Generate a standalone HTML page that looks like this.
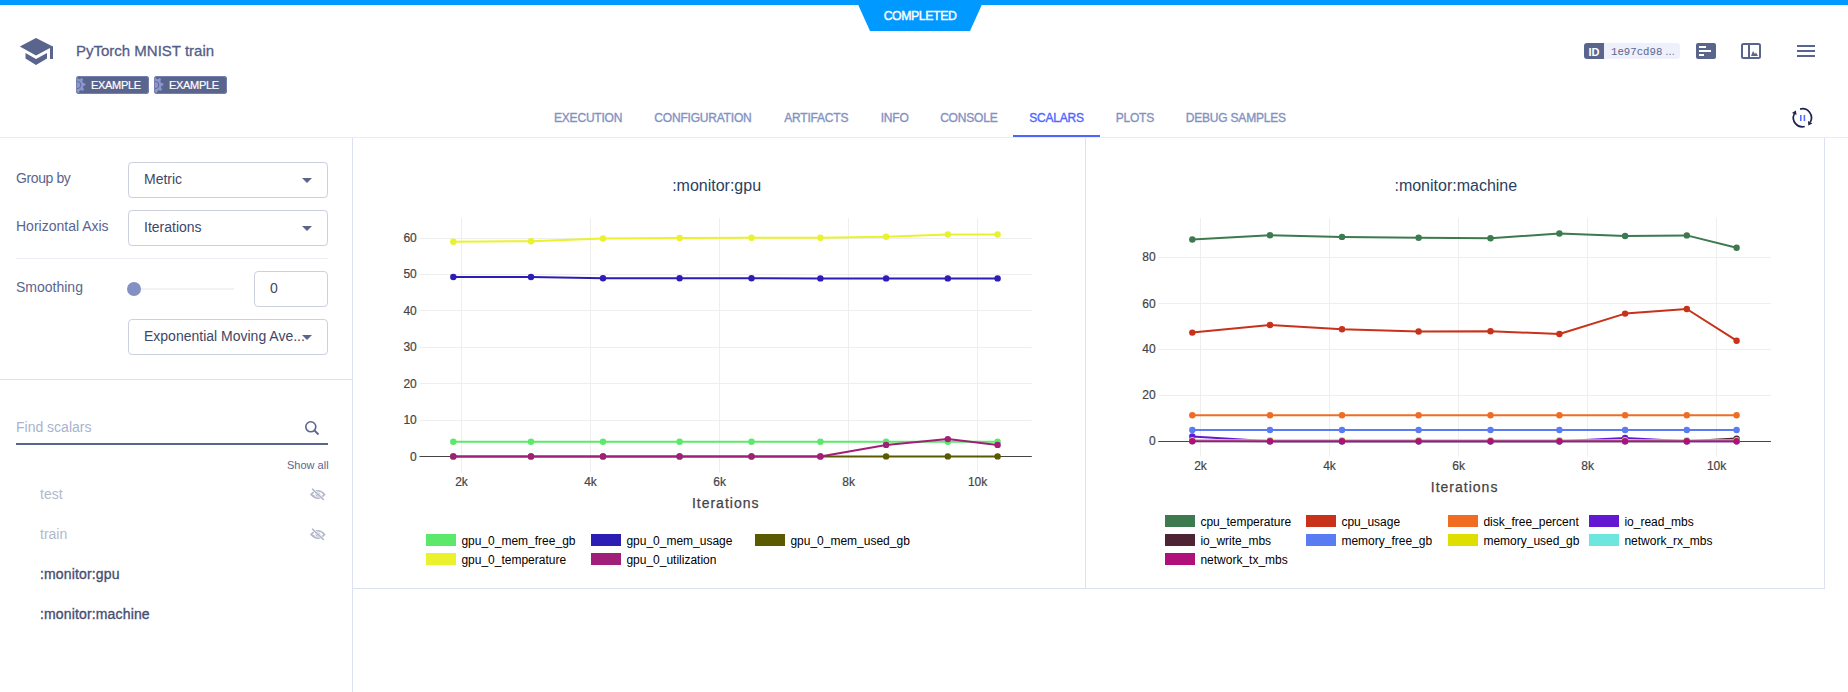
<!DOCTYPE html>
<html><head><meta charset="utf-8">
<style>
html,body{margin:0;padding:0;}
body{width:1848px;height:692px;overflow:hidden;position:relative;background:#fff;font-family:"Liberation Sans", sans-serif;}
.a{position:absolute;white-space:nowrap;}
.tab{position:absolute;top:109px;width:200px;text-align:center;font-size:12px;letter-spacing:-0.2px;font-weight:normal;-webkit-text-stroke:0.35px #8492c2;color:#8492c2;line-height:18px;white-space:nowrap;}
.tab.act{color:#4d66ff;-webkit-text-stroke:0.35px #4d66ff;}
.lbl{position:absolute;left:16px;font-size:14px;color:#5a658e;line-height:18px;white-space:nowrap;}
.dd{position:absolute;left:128px;width:198px;border:1px solid #cdd0df;border-radius:4px;background:#fff;}
.ddt{position:absolute;left:15px;font-size:14px;color:#3f4766;line-height:18px;white-space:nowrap;}
.arr{position:absolute;width:0;height:0;border-left:5px solid transparent;border-right:5px solid transparent;border-top:5px solid #5a658e;}
.it{position:absolute;left:40px;font-size:14px;line-height:18px;white-space:nowrap;}
svg text{font-family:"Liberation Sans", sans-serif;}
.tk{font-size:12px;fill:#444;stroke:#444;stroke-width:0.2px;}
.ttl{font-size:16px;fill:#2a3f5f;}
.itl{font-size:14px;fill:#444;stroke:#444;stroke-width:0.25px;letter-spacing:1px;}
.lg{font-size:12px;fill:#000;}
</style></head><body>
<!-- top status bar -->
<svg class="a" style="left:0;top:0" width="1848" height="40">
<rect x="0" y="0" width="1848" height="5" fill="#0099ff"/>
<polygon points="856,0 984,0 970,31 870,31" fill="#0099ff"/>
<text x="920" y="20" text-anchor="middle" font-size="12.3" fill="#fff" stroke="#fff" stroke-width="0.4" letter-spacing="-0.42">COMPLETED</text>
</svg>
<!-- cap icon -->
<svg class="a" style="left:0;top:0" width="70" height="70">
<polygon points="19.8,46.6 36,38 52.8,46.6 36,55.4" fill="#5a658e"/>
<polygon points="25.5,53 36,59 47,53 47,58.6 36,65 25.5,58.6" fill="#5a658e"/>
<rect x="50" y="46.2" width="3" height="12.8" fill="#5a658e"/>
</svg>
<div class="a" style="left:76px;top:42px;font-size:15px;line-height:18px;color:#535d88;-webkit-text-stroke:0.3px #535d88">PyTorch MNIST train</div>
<div class="a" style="left:76px;top:76px;width:73px;height:18px;background:#5a658e;border-radius:3px"></div>
<div class="a" style="left:154px;top:76px;width:73px;height:18px;background:#5a658e;border-radius:3px"></div>
<svg class="a" style="left:76px;top:76px" width="160" height="18">
<defs><clipPath id="c1"><rect x="0" y="0" width="73" height="18" rx="3"/></clipPath><clipPath id="c2"><rect x="78" y="0" width="73" height="18" rx="3"/></clipPath></defs>
<g clip-path="url(#c1)"><polygon points="9.34,7.38 9.50,9.00 7.28,10.21 6.93,11.37 8.10,13.61 7.07,14.87 4.64,14.16 3.57,14.73 2.82,17.14 1.20,17.30 -0.01,15.08 -1.17,14.73 -3.41,15.90 -4.67,14.87 -3.96,12.44 -4.53,11.37 -6.94,10.62 -7.10,9.00 -4.88,7.79 -4.53,6.63 -5.70,4.39 -4.67,3.13 -2.24,3.84 -1.17,3.27 -0.42,0.86 1.20,0.70 2.41,2.92 3.57,3.27 5.81,2.10 7.07,3.13 6.36,5.56 6.93,6.63" fill="#8a96cc"/><circle cx="1.2" cy="9" r="3.6" fill="none" stroke="#5a658e" stroke-width="0.9"/></g>
<g clip-path="url(#c2)"><polygon points="87.34,7.38 87.50,9.00 85.28,10.21 84.93,11.37 86.10,13.61 85.07,14.87 82.64,14.16 81.57,14.73 80.82,17.14 79.20,17.30 77.99,15.08 76.83,14.73 74.59,15.90 73.33,14.87 74.04,12.44 73.47,11.37 71.06,10.62 70.90,9.00 73.12,7.79 73.47,6.63 72.30,4.39 73.33,3.13 75.76,3.84 76.83,3.27 77.58,0.86 79.20,0.70 80.41,2.92 81.57,3.27 83.81,2.10 85.07,3.13 84.36,5.56 84.93,6.63" fill="#8a96cc"/><circle cx="79.2" cy="9" r="3.6" fill="none" stroke="#5a658e" stroke-width="0.9"/></g>
<rect x="0.5" y="0.5" width="72" height="17" rx="3" fill="none" stroke="#7580b0" stroke-width="1"/>
<rect x="78.5" y="0.5" width="72" height="17" rx="3" fill="none" stroke="#7580b0" stroke-width="1"/>
</svg>
<div class="a" style="left:91px;top:78px;font-size:11px;letter-spacing:-0.3px;line-height:14px;color:#fff;-webkit-text-stroke:0.2px #fff">EXAMPLE</div>
<div class="a" style="left:169px;top:78px;font-size:11px;letter-spacing:-0.3px;line-height:14px;color:#fff;-webkit-text-stroke:0.2px #fff">EXAMPLE</div>
<!-- id badge -->
<div class="a" style="left:1584px;top:43px;width:96px;height:16px;background:#eef1fb;border-radius:3px"></div>
<div class="a" style="left:1584px;top:43px;width:20px;height:16px;background:#5a658e;border-radius:3px 0 0 3px"></div>
<div class="a" style="left:1588.5px;top:44.5px;font-size:11px;line-height:14px;font-weight:bold;color:#fff">ID</div>
<div class="a" style="left:1611px;top:45px;font-size:10.7px;line-height:14px;font-family:'Liberation Mono',monospace;color:#5a658e">1e97cd98</div>
<div class="a" style="left:1665px;top:45px;font-size:10px;line-height:14px;color:#5a658e">&#8230;</div>
<svg class="a" style="left:1690px;top:35px" width="140" height="30">
<rect x="6" y="8" width="20" height="16" rx="2" fill="#5a658e"/>
<rect x="9" y="11" width="7" height="2" fill="#fff"/><rect x="9" y="15" width="12" height="2" fill="#fff"/><rect x="9" y="19" width="5" height="2" fill="#fff"/>
<rect x="52" y="9" width="18" height="14" rx="1.5" fill="none" stroke="#5a658e" stroke-width="2"/>
<rect x="58" y="9" width="2" height="14" fill="#5a658e"/>
<polygon points="61,21 63,16 65,19 66,17.5 68,21" fill="#5a658e"/>
<rect x="107" y="10" width="18" height="2" fill="#5a658e"/><rect x="107" y="15" width="18" height="2" fill="#5a658e"/><rect x="107" y="20" width="18" height="2" fill="#5a658e"/>
</svg>
<!-- tabs -->
<div class="tab" style="left:488.12px">EXECUTION</div><div class="tab" style="left:602.92px">CONFIGURATION</div><div class="tab" style="left:716.22px">ARTIFACTS</div><div class="tab" style="left:794.62px">INFO</div><div class="tab" style="left:868.82px">CONSOLE</div><div class="tab act" style="left:956.52px">SCALARS</div><div class="tab" style="left:1034.82px">PLOTS</div><div class="tab" style="left:1135.82px">DEBUG SAMPLES</div>
<div class="a" style="left:0;top:137px;width:1848px;height:1px;background:#e9ebf0"></div>
<div class="a" style="left:1013px;top:135px;width:87px;height:2px;background:#4d66ff"></div>
<svg class="a" style="left:1790px;top:106px" width="24" height="24" viewBox="0 0 24 24">
<path d="M10.07 3.11 A9.0 9.0 0 0 1 20.19 16.30" fill="none" stroke="#1d2350" stroke-width="1.7"/>
<path d="M14.73 20.49 A9.0 9.0 0 0 1 4.24 8.00" fill="none" stroke="#1d2350" stroke-width="1.7"/>
<polygon points="18.30,19.57 22.38,17.56 18.01,15.04" fill="#1d2350"/>
<polygon points="5.84,4.57 1.96,6.93 6.53,9.06" fill="#1d2350"/>
<rect x="10" y="9" width="1.6" height="6" fill="#5a6cff"/><rect x="13.6" y="9" width="1.6" height="6" fill="#5a6cff"/>
</svg>
<!-- sidebar -->
<div class="a" style="left:352px;top:138px;width:1px;height:554px;background:#dde0ee"></div>
<div class="lbl" style="top:169px;letter-spacing:-0.4px">Group by</div>
<div class="lbl" style="top:217px">Horizontal Axis</div>
<div class="dd" style="top:162px;height:34px"><div class="ddt" style="top:7px">Metric</div><div class="arr" style="left:173px;top:15px"></div></div>
<div class="dd" style="top:210px;height:34px"><div class="ddt" style="top:7px">Iterations</div><div class="arr" style="left:173px;top:15px"></div></div>
<div class="a" style="left:16px;top:258px;width:312px;height:1px;background:#eceef4"></div>
<div class="lbl" style="top:278px">Smoothing</div>
<div class="a" style="left:134px;top:288px;width:100px;height:2px;background:#f1f2f5"></div>
<div class="a" style="left:127px;top:282px;width:14px;height:14px;border-radius:50%;background:#8290c4"></div>
<div class="dd" style="left:254px;width:72px;top:271px;height:34px"><div class="ddt" style="top:7px">0</div></div>
<div class="dd" style="top:319px;height:34px"><div class="ddt" style="top:7px">Exponential Moving Ave...</div><div class="arr" style="left:173px;top:15px"></div></div>
<div class="a" style="left:0;top:379px;width:352px;height:1px;background:#dde0ee"></div>
<div class="a" style="left:16px;top:418px;font-size:14px;line-height:18px;color:#a9b2d2">Find scalars</div>
<div class="a" style="left:16px;top:443px;width:312px;height:2px;background:#5a658e"></div>
<svg class="a" style="left:304px;top:420px" width="16" height="16" viewBox="0 0 16 16">
<circle cx="6.8" cy="6.8" r="5" fill="none" stroke="#5a658e" stroke-width="1.6"/>
<line x1="10.5" y1="10.5" x2="14.5" y2="14.5" stroke="#5a658e" stroke-width="1.8"/>
</svg>
<div class="a" style="left:287px;top:458px;font-size:11px;line-height:14px;color:#5a658e">Show all</div>
<div class="it" style="top:485px;color:#b3b8ca">test</div>
<div class="it" style="top:525px;color:#b3b8ca">train</div>
<div class="it" style="top:565px;color:#474f73;font-size:14px;letter-spacing:0.15px;-webkit-text-stroke:0.35px #474f73">:monitor:gpu</div>
<div class="it" style="top:605px;color:#474f73;font-size:14px;letter-spacing:0.15px;-webkit-text-stroke:0.35px #474f73">:monitor:machine</div>
<svg class="a" style="left:306px;top:484px" width="24" height="60" viewBox="0 0 24 60">
<g><path d="M5 10.5 Q11.8 3 18.6 10.5 Q11.8 18 5 10.5Z" fill="none" stroke="#b3b8ca" stroke-width="1.7"/>
<circle cx="11.8" cy="10.5" r="2.3" fill="#b3b8ca"/>
<path d="M5.6 10.5 Q8 13.8 11 14.6 L8 11 Z" fill="#b3b8ca"/>
<line x1="6.2" y1="4.8" x2="17.6" y2="15.6" stroke="#fff" stroke-width="2.6"/>
<line x1="6.5" y1="5.2" x2="17.3" y2="15.3" stroke="#b3b8ca" stroke-width="1.6" stroke-linecap="round"/></g>
<g transform="translate(0,40)"><path d="M5 10.5 Q11.8 3 18.6 10.5 Q11.8 18 5 10.5Z" fill="none" stroke="#b3b8ca" stroke-width="1.7"/>
<circle cx="11.8" cy="10.5" r="2.3" fill="#b3b8ca"/>
<path d="M5.6 10.5 Q8 13.8 11 14.6 L8 11 Z" fill="#b3b8ca"/>
<line x1="6.2" y1="4.8" x2="17.6" y2="15.6" stroke="#fff" stroke-width="2.6"/>
<line x1="6.5" y1="5.2" x2="17.3" y2="15.3" stroke="#b3b8ca" stroke-width="1.6" stroke-linecap="round"/></g>
</svg>
<!-- chart panels -->
<div class="a" style="left:1085px;top:138px;width:1px;height:450px;background:#dde0ee"></div>
<div class="a" style="left:1824px;top:138px;width:1px;height:450px;background:#dde0ee"></div>
<div class="a" style="left:352px;top:588px;width:1473px;height:1px;background:#dde0ee"></div>
<svg class="a" style="left:0;top:0" width="1848" height="692">
<line x1="461.5" y1="218" x2="461.5" y2="472.6" stroke="#eeeeee" stroke-width="1"/>
<line x1="590.5" y1="218" x2="590.5" y2="472.6" stroke="#eeeeee" stroke-width="1"/>
<line x1="719.5" y1="218" x2="719.5" y2="472.6" stroke="#eeeeee" stroke-width="1"/>
<line x1="848.5" y1="218" x2="848.5" y2="472.6" stroke="#eeeeee" stroke-width="1"/>
<line x1="977.5" y1="218" x2="977.5" y2="472.6" stroke="#eeeeee" stroke-width="1"/>
<line x1="419.5" y1="420.5" x2="1031.8" y2="420.5" stroke="#eeeeee" stroke-width="1"/>
<line x1="419.5" y1="383.5" x2="1031.8" y2="383.5" stroke="#eeeeee" stroke-width="1"/>
<line x1="419.5" y1="347.5" x2="1031.8" y2="347.5" stroke="#eeeeee" stroke-width="1"/>
<line x1="419.5" y1="310.5" x2="1031.8" y2="310.5" stroke="#eeeeee" stroke-width="1"/>
<line x1="419.5" y1="274.5" x2="1031.8" y2="274.5" stroke="#eeeeee" stroke-width="1"/>
<line x1="419.5" y1="238.5" x2="1031.8" y2="238.5" stroke="#eeeeee" stroke-width="1"/>
<line x1="419.5" y1="456.5" x2="1031.8" y2="456.5" stroke="#444" stroke-width="1"/>
<text x="461.5" y="486" text-anchor="middle" class="tk">2k</text>
<text x="590.5" y="486" text-anchor="middle" class="tk">4k</text>
<text x="719.6" y="486" text-anchor="middle" class="tk">6k</text>
<text x="848.6" y="486" text-anchor="middle" class="tk">8k</text>
<text x="977.6" y="486" text-anchor="middle" class="tk">10k</text>
<text x="416.8" y="460.5" text-anchor="end" class="tk">0</text>
<text x="416.8" y="424.4" text-anchor="end" class="tk">10</text>
<text x="416.8" y="387.8" text-anchor="end" class="tk">20</text>
<text x="416.8" y="351.4" text-anchor="end" class="tk">30</text>
<text x="416.8" y="315.0" text-anchor="end" class="tk">40</text>
<text x="416.8" y="278.4" text-anchor="end" class="tk">50</text>
<text x="416.8" y="242.3" text-anchor="end" class="tk">60</text>
<polyline points="453.3,441.7 531.0,441.7 603.0,441.7 679.6,441.7 751.5,441.7 820.4,441.7 886.1,441.7 947.8,441.7 997.6,441.7" fill="none" stroke="#5ce86b" stroke-width="2" stroke-linejoin="round"/><circle cx="453.3" cy="441.7" r="3.2" fill="#5ce86b"/><circle cx="531.0" cy="441.7" r="3.2" fill="#5ce86b"/><circle cx="603.0" cy="441.7" r="3.2" fill="#5ce86b"/><circle cx="679.6" cy="441.7" r="3.2" fill="#5ce86b"/><circle cx="751.5" cy="441.7" r="3.2" fill="#5ce86b"/><circle cx="820.4" cy="441.7" r="3.2" fill="#5ce86b"/><circle cx="886.1" cy="441.7" r="3.2" fill="#5ce86b"/><circle cx="947.8" cy="441.7" r="3.2" fill="#5ce86b"/><circle cx="997.6" cy="441.7" r="3.2" fill="#5ce86b"/>
<polyline points="453.3,277.0 531.0,277.0 603.0,278.3 679.6,278.3 751.5,278.3 820.4,278.4 886.1,278.4 947.8,278.4 997.6,278.4" fill="none" stroke="#2c1db5" stroke-width="2" stroke-linejoin="round"/><circle cx="453.3" cy="277.0" r="3.2" fill="#2c1db5"/><circle cx="531.0" cy="277.0" r="3.2" fill="#2c1db5"/><circle cx="603.0" cy="278.3" r="3.2" fill="#2c1db5"/><circle cx="679.6" cy="278.3" r="3.2" fill="#2c1db5"/><circle cx="751.5" cy="278.3" r="3.2" fill="#2c1db5"/><circle cx="820.4" cy="278.4" r="3.2" fill="#2c1db5"/><circle cx="886.1" cy="278.4" r="3.2" fill="#2c1db5"/><circle cx="947.8" cy="278.4" r="3.2" fill="#2c1db5"/><circle cx="997.6" cy="278.4" r="3.2" fill="#2c1db5"/>
<polyline points="453.3,456.4 531.0,456.4 603.0,456.4 679.6,456.4 751.5,456.4 820.4,456.4 886.1,456.4 947.8,456.4 997.6,456.4" fill="none" stroke="#5c5a00" stroke-width="2" stroke-linejoin="round"/><circle cx="453.3" cy="456.4" r="3.2" fill="#5c5a00"/><circle cx="531.0" cy="456.4" r="3.2" fill="#5c5a00"/><circle cx="603.0" cy="456.4" r="3.2" fill="#5c5a00"/><circle cx="679.6" cy="456.4" r="3.2" fill="#5c5a00"/><circle cx="751.5" cy="456.4" r="3.2" fill="#5c5a00"/><circle cx="820.4" cy="456.4" r="3.2" fill="#5c5a00"/><circle cx="886.1" cy="456.4" r="3.2" fill="#5c5a00"/><circle cx="947.8" cy="456.4" r="3.2" fill="#5c5a00"/><circle cx="997.6" cy="456.4" r="3.2" fill="#5c5a00"/>
<polyline points="453.3,241.7 531.0,241.2 603.0,238.4 679.6,238.0 751.5,237.8 820.4,237.8 886.1,236.7 947.8,234.5 997.6,234.5" fill="none" stroke="#e9f22c" stroke-width="2" stroke-linejoin="round"/><circle cx="453.3" cy="241.7" r="3.2" fill="#e9f22c"/><circle cx="531.0" cy="241.2" r="3.2" fill="#e9f22c"/><circle cx="603.0" cy="238.4" r="3.2" fill="#e9f22c"/><circle cx="679.6" cy="238.0" r="3.2" fill="#e9f22c"/><circle cx="751.5" cy="237.8" r="3.2" fill="#e9f22c"/><circle cx="820.4" cy="237.8" r="3.2" fill="#e9f22c"/><circle cx="886.1" cy="236.7" r="3.2" fill="#e9f22c"/><circle cx="947.8" cy="234.5" r="3.2" fill="#e9f22c"/><circle cx="997.6" cy="234.5" r="3.2" fill="#e9f22c"/>
<polyline points="453.3,456.4 531.0,456.4 603.0,456.4 679.6,456.4 751.5,456.4 820.4,456.4 886.1,444.9 947.8,439.1 997.6,444.9" fill="none" stroke="#a01f78" stroke-width="2" stroke-linejoin="round"/><circle cx="453.3" cy="456.4" r="3.2" fill="#a01f78"/><circle cx="531.0" cy="456.4" r="3.2" fill="#a01f78"/><circle cx="603.0" cy="456.4" r="3.2" fill="#a01f78"/><circle cx="679.6" cy="456.4" r="3.2" fill="#a01f78"/><circle cx="751.5" cy="456.4" r="3.2" fill="#a01f78"/><circle cx="820.4" cy="456.4" r="3.2" fill="#a01f78"/><circle cx="886.1" cy="444.9" r="3.2" fill="#a01f78"/><circle cx="947.8" cy="439.1" r="3.2" fill="#a01f78"/><circle cx="997.6" cy="444.9" r="3.2" fill="#a01f78"/>
<text x="716.6" y="190.8" text-anchor="middle" class="ttl">:monitor:gpu</text>
<text x="725.7" y="508" text-anchor="middle" class="itl">Iterations</text>
<rect x="426" y="534" width="30" height="12" fill="#5ce86b"/>
<text x="461.4" y="545.2" class="lg">gpu_0_mem_free_gb</text>
<rect x="591" y="534" width="30" height="12" fill="#2c1db5"/>
<text x="626.4" y="545.2" class="lg">gpu_0_mem_usage</text>
<rect x="755" y="534" width="30" height="12" fill="#5c5a00"/>
<text x="790.4" y="545.2" class="lg">gpu_0_mem_used_gb</text>
<rect x="426" y="553" width="30" height="12" fill="#e9f22c"/>
<text x="461.4" y="564.2" class="lg">gpu_0_temperature</text>
<rect x="591" y="553" width="30" height="12" fill="#a01f78"/>
<text x="626.4" y="564.2" class="lg">gpu_0_utilization</text><line x1="1200.5" y1="218" x2="1200.5" y2="456.4" stroke="#eeeeee" stroke-width="1"/>
<line x1="1329.5" y1="218" x2="1329.5" y2="456.4" stroke="#eeeeee" stroke-width="1"/>
<line x1="1458.5" y1="218" x2="1458.5" y2="456.4" stroke="#eeeeee" stroke-width="1"/>
<line x1="1587.5" y1="218" x2="1587.5" y2="456.4" stroke="#eeeeee" stroke-width="1"/>
<line x1="1716.5" y1="218" x2="1716.5" y2="456.4" stroke="#eeeeee" stroke-width="1"/>
<line x1="1158.3" y1="395.5" x2="1770.9" y2="395.5" stroke="#eeeeee" stroke-width="1"/>
<line x1="1158.3" y1="349.5" x2="1770.9" y2="349.5" stroke="#eeeeee" stroke-width="1"/>
<line x1="1158.3" y1="303.5" x2="1770.9" y2="303.5" stroke="#eeeeee" stroke-width="1"/>
<line x1="1158.3" y1="257.5" x2="1770.9" y2="257.5" stroke="#eeeeee" stroke-width="1"/>
<line x1="1158.3" y1="441.5" x2="1770.9" y2="441.5" stroke="#444" stroke-width="1"/>
<text x="1200.5" y="470" text-anchor="middle" class="tk">2k</text>
<text x="1329.5" y="470" text-anchor="middle" class="tk">4k</text>
<text x="1458.6" y="470" text-anchor="middle" class="tk">6k</text>
<text x="1587.6" y="470" text-anchor="middle" class="tk">8k</text>
<text x="1716.6" y="470" text-anchor="middle" class="tk">10k</text>
<text x="1155.6" y="445.3" text-anchor="end" class="tk">0</text>
<text x="1155.6" y="399.4" text-anchor="end" class="tk">20</text>
<text x="1155.6" y="353.3" text-anchor="end" class="tk">40</text>
<text x="1155.6" y="307.5" text-anchor="end" class="tk">60</text>
<text x="1155.6" y="261.4" text-anchor="end" class="tk">80</text>
<polyline points="1192.3,239.5 1270.0,235.2 1342.0,236.9 1418.6,237.7 1490.5,238.2 1559.4,233.5 1625.1,236.0 1686.8,235.4 1736.6,247.7" fill="none" stroke="#3d7a50" stroke-width="2" stroke-linejoin="round"/><circle cx="1192.3" cy="239.5" r="3.2" fill="#3d7a50"/><circle cx="1270.0" cy="235.2" r="3.2" fill="#3d7a50"/><circle cx="1342.0" cy="236.9" r="3.2" fill="#3d7a50"/><circle cx="1418.6" cy="237.7" r="3.2" fill="#3d7a50"/><circle cx="1490.5" cy="238.2" r="3.2" fill="#3d7a50"/><circle cx="1559.4" cy="233.5" r="3.2" fill="#3d7a50"/><circle cx="1625.1" cy="236.0" r="3.2" fill="#3d7a50"/><circle cx="1686.8" cy="235.4" r="3.2" fill="#3d7a50"/><circle cx="1736.6" cy="247.7" r="3.2" fill="#3d7a50"/>
<polyline points="1192.3,332.6 1270.0,325.0 1342.0,329.3 1418.6,331.5 1490.5,331.3 1559.4,334.0 1625.1,313.6 1686.8,309.0 1736.6,340.7" fill="none" stroke="#c8321a" stroke-width="2" stroke-linejoin="round"/><circle cx="1192.3" cy="332.6" r="3.2" fill="#c8321a"/><circle cx="1270.0" cy="325.0" r="3.2" fill="#c8321a"/><circle cx="1342.0" cy="329.3" r="3.2" fill="#c8321a"/><circle cx="1418.6" cy="331.5" r="3.2" fill="#c8321a"/><circle cx="1490.5" cy="331.3" r="3.2" fill="#c8321a"/><circle cx="1559.4" cy="334.0" r="3.2" fill="#c8321a"/><circle cx="1625.1" cy="313.6" r="3.2" fill="#c8321a"/><circle cx="1686.8" cy="309.0" r="3.2" fill="#c8321a"/><circle cx="1736.6" cy="340.7" r="3.2" fill="#c8321a"/>
<polyline points="1192.3,415.2 1270.0,415.2 1342.0,415.2 1418.6,415.2 1490.5,415.2 1559.4,415.2 1625.1,415.2 1686.8,415.2 1736.6,415.2" fill="none" stroke="#f06c22" stroke-width="2" stroke-linejoin="round"/><circle cx="1192.3" cy="415.2" r="3.2" fill="#f06c22"/><circle cx="1270.0" cy="415.2" r="3.2" fill="#f06c22"/><circle cx="1342.0" cy="415.2" r="3.2" fill="#f06c22"/><circle cx="1418.6" cy="415.2" r="3.2" fill="#f06c22"/><circle cx="1490.5" cy="415.2" r="3.2" fill="#f06c22"/><circle cx="1559.4" cy="415.2" r="3.2" fill="#f06c22"/><circle cx="1625.1" cy="415.2" r="3.2" fill="#f06c22"/><circle cx="1686.8" cy="415.2" r="3.2" fill="#f06c22"/><circle cx="1736.6" cy="415.2" r="3.2" fill="#f06c22"/>
<polyline points="1192.3,436.4 1270.0,441.2 1342.0,441.2 1418.6,441.2 1490.5,441.2 1559.4,441.2 1625.1,438.0 1686.8,441.2 1736.6,441.2" fill="none" stroke="#6418d2" stroke-width="2" stroke-linejoin="round"/><circle cx="1192.3" cy="436.4" r="3.2" fill="#6418d2"/><circle cx="1270.0" cy="441.2" r="3.2" fill="#6418d2"/><circle cx="1342.0" cy="441.2" r="3.2" fill="#6418d2"/><circle cx="1418.6" cy="441.2" r="3.2" fill="#6418d2"/><circle cx="1490.5" cy="441.2" r="3.2" fill="#6418d2"/><circle cx="1559.4" cy="441.2" r="3.2" fill="#6418d2"/><circle cx="1625.1" cy="438.0" r="3.2" fill="#6418d2"/><circle cx="1686.8" cy="441.2" r="3.2" fill="#6418d2"/><circle cx="1736.6" cy="441.2" r="3.2" fill="#6418d2"/>
<polyline points="1192.3,440.8 1270.0,441.2 1342.0,441.2 1418.6,441.2 1490.5,441.2 1559.4,441.2 1625.1,441.2 1686.8,441.2 1736.6,438.6" fill="none" stroke="#4c2434" stroke-width="2" stroke-linejoin="round"/><circle cx="1192.3" cy="440.8" r="3.2" fill="#4c2434"/><circle cx="1270.0" cy="441.2" r="3.2" fill="#4c2434"/><circle cx="1342.0" cy="441.2" r="3.2" fill="#4c2434"/><circle cx="1418.6" cy="441.2" r="3.2" fill="#4c2434"/><circle cx="1490.5" cy="441.2" r="3.2" fill="#4c2434"/><circle cx="1559.4" cy="441.2" r="3.2" fill="#4c2434"/><circle cx="1625.1" cy="441.2" r="3.2" fill="#4c2434"/><circle cx="1686.8" cy="441.2" r="3.2" fill="#4c2434"/><circle cx="1736.6" cy="438.6" r="3.2" fill="#4c2434"/>
<polyline points="1192.3,430.0 1270.0,430.0 1342.0,430.0 1418.6,430.0 1490.5,430.0 1559.4,430.0 1625.1,430.0 1686.8,430.0 1736.6,430.0" fill="none" stroke="#5a7cf2" stroke-width="2" stroke-linejoin="round"/><circle cx="1192.3" cy="430.0" r="3.2" fill="#5a7cf2"/><circle cx="1270.0" cy="430.0" r="3.2" fill="#5a7cf2"/><circle cx="1342.0" cy="430.0" r="3.2" fill="#5a7cf2"/><circle cx="1418.6" cy="430.0" r="3.2" fill="#5a7cf2"/><circle cx="1490.5" cy="430.0" r="3.2" fill="#5a7cf2"/><circle cx="1559.4" cy="430.0" r="3.2" fill="#5a7cf2"/><circle cx="1625.1" cy="430.0" r="3.2" fill="#5a7cf2"/><circle cx="1686.8" cy="430.0" r="3.2" fill="#5a7cf2"/><circle cx="1736.6" cy="430.0" r="3.2" fill="#5a7cf2"/>
<polyline points="1192.3,440.2 1270.0,440.2 1342.0,440.2 1418.6,440.2 1490.5,440.2 1559.4,440.2 1625.1,440.2 1686.8,440.2 1736.6,440.2" fill="none" stroke="#dede00" stroke-width="2" stroke-linejoin="round"/><circle cx="1192.3" cy="440.2" r="3.2" fill="#dede00"/><circle cx="1270.0" cy="440.2" r="3.2" fill="#dede00"/><circle cx="1342.0" cy="440.2" r="3.2" fill="#dede00"/><circle cx="1418.6" cy="440.2" r="3.2" fill="#dede00"/><circle cx="1490.5" cy="440.2" r="3.2" fill="#dede00"/><circle cx="1559.4" cy="440.2" r="3.2" fill="#dede00"/><circle cx="1625.1" cy="440.2" r="3.2" fill="#dede00"/><circle cx="1686.8" cy="440.2" r="3.2" fill="#dede00"/><circle cx="1736.6" cy="440.2" r="3.2" fill="#dede00"/>
<polyline points="1192.3,441.2 1270.0,441.2 1342.0,441.2 1418.6,441.2 1490.5,441.2 1559.4,441.2 1625.1,441.2 1686.8,441.2 1736.6,441.2" fill="none" stroke="#6ee6e0" stroke-width="2" stroke-linejoin="round"/><circle cx="1192.3" cy="441.2" r="3.2" fill="#6ee6e0"/><circle cx="1270.0" cy="441.2" r="3.2" fill="#6ee6e0"/><circle cx="1342.0" cy="441.2" r="3.2" fill="#6ee6e0"/><circle cx="1418.6" cy="441.2" r="3.2" fill="#6ee6e0"/><circle cx="1490.5" cy="441.2" r="3.2" fill="#6ee6e0"/><circle cx="1559.4" cy="441.2" r="3.2" fill="#6ee6e0"/><circle cx="1625.1" cy="441.2" r="3.2" fill="#6ee6e0"/><circle cx="1686.8" cy="441.2" r="3.2" fill="#6ee6e0"/><circle cx="1736.6" cy="441.2" r="3.2" fill="#6ee6e0"/>
<polyline points="1192.3,441.2 1270.0,441.2 1342.0,441.2 1418.6,441.2 1490.5,441.2 1559.4,441.2 1625.1,441.2 1686.8,441.2 1736.6,441.2" fill="none" stroke="#b0107a" stroke-width="2" stroke-linejoin="round"/><circle cx="1192.3" cy="441.2" r="3.2" fill="#b0107a"/><circle cx="1270.0" cy="441.2" r="3.2" fill="#b0107a"/><circle cx="1342.0" cy="441.2" r="3.2" fill="#b0107a"/><circle cx="1418.6" cy="441.2" r="3.2" fill="#b0107a"/><circle cx="1490.5" cy="441.2" r="3.2" fill="#b0107a"/><circle cx="1559.4" cy="441.2" r="3.2" fill="#b0107a"/><circle cx="1625.1" cy="441.2" r="3.2" fill="#b0107a"/><circle cx="1686.8" cy="441.2" r="3.2" fill="#b0107a"/><circle cx="1736.6" cy="441.2" r="3.2" fill="#b0107a"/>
<text x="1455.8" y="190.8" text-anchor="middle" class="ttl">:monitor:machine</text>
<text x="1464.6" y="491.5" text-anchor="middle" class="itl">Iterations</text>
<rect x="1165" y="515" width="30" height="12" fill="#3d7a50"/>
<text x="1200.4" y="526.2" class="lg">cpu_temperature</text>
<rect x="1306" y="515" width="30" height="12" fill="#c8321a"/>
<text x="1341.4" y="526.2" class="lg">cpu_usage</text>
<rect x="1448" y="515" width="30" height="12" fill="#f06c22"/>
<text x="1483.4" y="526.2" class="lg">disk_free_percent</text>
<rect x="1589" y="515" width="30" height="12" fill="#6418d2"/>
<text x="1624.4" y="526.2" class="lg">io_read_mbs</text>
<rect x="1165" y="534" width="30" height="12" fill="#4c2434"/>
<text x="1200.4" y="545.2" class="lg">io_write_mbs</text>
<rect x="1306" y="534" width="30" height="12" fill="#5a7cf2"/>
<text x="1341.4" y="545.2" class="lg">memory_free_gb</text>
<rect x="1448" y="534" width="30" height="12" fill="#dede00"/>
<text x="1483.4" y="545.2" class="lg">memory_used_gb</text>
<rect x="1589" y="534" width="30" height="12" fill="#6ee6e0"/>
<text x="1624.4" y="545.2" class="lg">network_rx_mbs</text>
<rect x="1165" y="553" width="30" height="12" fill="#b0107a"/>
<text x="1200.4" y="564.2" class="lg">network_tx_mbs</text>
</svg>
</body></html>
